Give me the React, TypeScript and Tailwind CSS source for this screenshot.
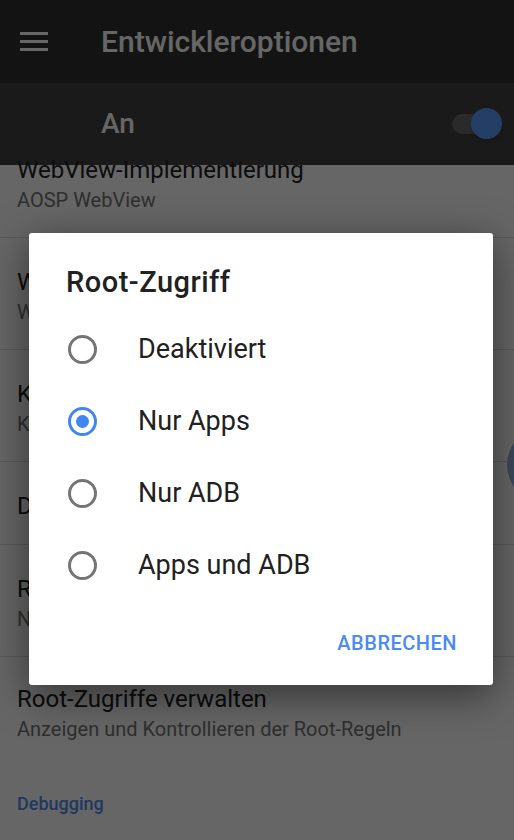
import { useState } from 'react';

const items = [
  { title: 'WebView-Implementierung', summary: 'AOSP WebView' },
  { title: 'WebView-Multiprozess', summary: 'WebView-Renderer separat ausführen' },
  { title: 'Kamera-HAL3 aktivieren', summary: 'Kamera-HAL3 verwenden' },
  { title: 'Demomodus' },
  { title: 'Root-Zugriff', summary: 'Nur Apps' },
];

const options = ['Deaktiviert', 'Nur Apps', 'Nur ADB', 'Apps und ADB'];

function Radio({ checked }: { checked: boolean }) {
  return (
    <div
      className={`flex h-[29px] w-[29px] shrink-0 items-center justify-center rounded-full border-[3px] ${
        checked ? 'border-[#4285f4]' : 'border-[#757575]'
      }`}
    >
      {checked && <div className="h-[13px] w-[13px] rounded-full bg-[#4285f4]" />}
    </div>
  );
}

export default function App() {
  const [selected, setSelected] = useState(1);

  return (
    <div
      className="relative h-[840px] w-[514px] overflow-hidden bg-white"
      style={{ fontFamily: 'Roboto, "Noto Sans", sans-serif' }}
    >
      {/* toolbar */}
      <div className="flex h-[83px] items-center bg-[#303030]">
        <div className="flex w-[101px] shrink-0 flex-col gap-[5px] pl-[20px]">
          <span className="h-[3px] w-[28px] bg-white" />
          <span className="h-[3px] w-[28px] bg-white" />
          <span className="h-[3px] w-[28px] bg-white" />
        </div>
        <h1 className="text-[30px] font-medium text-white">Entwickleroptionen</h1>
      </div>

      {/* master switch */}
      <div className="flex h-[82px] items-center justify-between bg-[#424242] pl-[101px] pr-[12px]">
        <span className="text-[28px] font-medium text-white">An</span>
        <div className="relative flex h-[30px] w-[50px] items-center">
          <div className="h-[20px] w-[38px] rounded-full bg-[#6a6a6a]" />
          <div className="absolute right-0 top-[-1px] h-[31px] w-[31px] rounded-full bg-[#5b9cff] shadow-md" />
        </div>
      </div>

      {/* settings list (scrolled) */}
      <div className="mt-[-39px]">
        {items.map((item) => (
          <div
            key={item.title}
            className={`border-b border-[#dcdcdc] px-[17px] pt-[29px] ${item.summary ? 'pb-[24px]' : 'pb-[23px]'}`}
          >
            <div className="text-[24px] leading-[30px] text-[#212121]">{item.title}</div>
            {item.summary && (
              <div className="mt-[3px] text-[20px] leading-[25px] text-[#757575]">{item.summary}</div>
            )}
          </div>
        ))}
        <div className="px-[17px] pt-[27px]">
          <div className="text-[24px] leading-[30px] text-[#212121]">Root-Zugriffe verwalten</div>
          <div className="mt-[3px] text-[20px] leading-[25px] text-[#757575]">
            Anzeigen und Kontrollieren der Root-Regeln
          </div>
        </div>
        <div className="px-[17px] pt-[50px] text-[18px] font-medium leading-[24px] text-[#4f8cf0]">Debugging</div>
      </div>

      {/* partly hidden floating button */}
      <div className="absolute left-[507px] top-[427px] h-[76px] w-[76px] rounded-full bg-[#9aaee0]" />

      {/* scrim + dialog */}
      <div className="absolute inset-0 bg-black/60">
        <div className="ml-[29px] mt-[233px] h-[452px] w-[464px] rounded-[3px] bg-white shadow-[0_10px_40px_rgba(0,0,0,0.5)]">
          <h2 className="pl-[37px] pt-[32px] text-[29px] font-medium leading-[34px] tracking-[0.5px] text-[#212121]">
            Root-Zugriff
          </h2>
          <div className="mt-[14px]">
            {options.map((opt, i) => (
              <div
                key={opt}
                onClick={() => setSelected(i)}
                className="flex h-[72px] cursor-pointer items-center gap-[41px] pl-[39px]"
              >
                <Radio checked={selected === i} />
                <span className="text-[27px] text-[#212121]">{opt}</span>
              </div>
            ))}
          </div>
          <div className="mt-[24px] flex h-[36px] items-center justify-end pr-[36px]">
            <button className="text-[20px] font-medium tracking-[0.5px] text-[#4a8af4]">ABBRECHEN</button>
          </div>
        </div>
      </div>
    </div>
  );
}
